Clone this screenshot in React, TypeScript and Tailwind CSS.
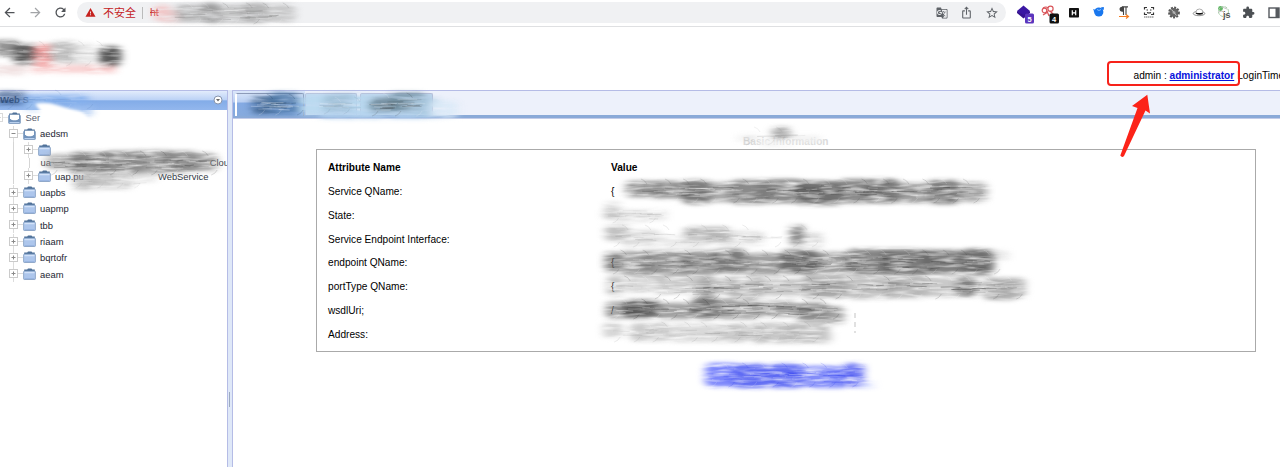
import React from "react";
import {
  MdArrowBack,
  MdArrowForward,
  MdRefresh,
  MdWarning,
  MdGTranslate,
  MdIosShare,
  MdStarBorder,
  MdExtension,
} from "react-icons/md";

type Blob = [x: number, y: number, rx: number, ry: number, color: string, opacity: number];
type Streaks = { x: number; y: number; w: number; h: number; color: string; opacity: number; count: number };

const random = (seed: number) => {
  const v = Math.sin(seed * 127.1 + 11.7) * 43758.5453;
  return v - Math.floor(v);
};

function StreakSet({ s }: { s: Streaks }) {
  return (
    <g>
      {Array.from({ length: s.count }, (_, i) => {
        const k = s.x * 3 + s.y + i * 7;
        const len = 6 + random(k) * 20;
        const px = s.x + random(k + 1) * Math.max(1, s.w - len);
        const off = (random(k + 2) + random(k + 3) - 1) * 0.32;
        const py = s.y + s.h / 2 + off * s.h;
        const white = random(k + 4) > 0.55;
        return (
          <path
            key={i}
            d={`M${px} ${py} q${len / 2} ${(random(k + 5) - 0.5) * 2} ${len} ${(random(k + 6) - 0.5) * 1.2}`}
            fill="none"
            stroke={white ? "#fff" : s.color}
            strokeWidth={0.4 + random(k + 8) * 0.5}
            opacity={s.opacity * (white ? 0.6 : 0.25 + random(k + 7) * 0.6)}
          />
        );
      })}
      {Array.from({ length: Math.floor(s.w / 10) }, (_, i) => {
        const k = s.x + s.y + i * 5;
        const bottom = i % 2 === 0;
        const px = s.x + 4 + i * 10 + random(k) * 5;
        const py = bottom ? s.y + s.h - 3 : s.y + 1;
        return (
          <path
            key={`e${i}`}
            d={bottom ? `M${px} ${py + 3} q4 -1 6 -5` : `M${px} ${py - 2} q4 1 6 5`}
            fill="none"
            stroke={random(k + 2) > 0.5 ? s.color : "#fff"}
            strokeWidth="0.9"
            opacity={s.opacity * 0.35}
          />
        );
      })}
    </g>
  );
}

const blobs: Blob[] = [
  // address bar
  [162, 13, 8, 8, "#f3b5b5", 0.7], [172, 16, 8, 7, "#e8c4c4", 0.7], [190, 13, 14, 9, "#9a9a9a", 0.6],
  [211, 13, 9, 10, "#777", 0.7], [232, 14, 13, 10, "#aaa", 0.6], [255, 13, 13, 10, "#909090", 0.6],
  [279, 13, 16, 9, "#b4b4b4", 0.65],
  // logo
  [6, 48, 13, 8, "#666", 0.7], [25, 54, 12, 10, "#4c4c4c", 0.9], [43, 55, 10, 11, "#ef8f8f", 0.85],
  [64, 52, 14, 11, "#b0b0b0", 0.8], [84, 54, 11, 11, "#ddd", 0.7], [110, 56, 11, 10, "#484848", 0.9],
  [60, 69, 30, 4, "#f5b5b5", 0.6], [102, 69, 14, 4, "#f5b0b0", 0.65], [10, 70, 16, 5, "#e8cfcf", 0.6],
  // panel title
  [10, 98, 15, 7, "#2e4d7c", 0.6], [55, 100, 33, 5, "#7faceb", 0.8], [33, 106, 8, 5, "#9fc2f0", 0.8],
  [80, 110, 12, 6, "#9dbff0", 0.8],
  // tree
  [65, 162, 19, 8, "#999", 0.7], [90, 163, 20, 11, "#707070", 0.8], [122, 163, 23, 12, "#777", 0.8],
  [153, 162, 20, 12, "#888", 0.75], [181, 162, 18, 11, "#777", 0.8], [206, 162, 11, 9, "#8d8d8d", 0.8],
  [85, 182, 12, 8, "#aaa", 0.65], [108, 180, 24, 9, "#bbb", 0.75], [140, 177, 17, 5, "#ddd", 0.7],
  // tabs
  [266, 105, 14, 9, "#31567f", 0.75], [284, 103, 16, 11, "#416f9f", 0.7], [315, 105, 17, 10, "#b9d9ef", 0.9],
  [342, 104, 18, 10, "#9cbdd3", 0.8], [365, 106, 15, 11, "#b8d8ef", 0.9], [386, 106, 16, 8, "#5d7888", 0.75],
  [407, 102, 18, 10, "#6a8798", 0.7], [380, 115, 60, 4, "#b5d3ef", 0.8], [427, 107, 15, 9, "#a9c8e0", 0.8], [444, 109, 14, 9, "#dbeaf7", 0.9],
  // heading
  [748, 138, 10, 4, "#ddd", 0.5], [781, 133, 9, 6, "#777", 0.6], [776, 143, 16, 4, "#f4f4f4", 0.9], [805, 139, 16, 4, "#f0f0f0", 0.8],
  // service name
  [644, 189, 18, 8, "#888", 0.9], [670, 191, 18, 10, "#858585", 0.9], [697, 192, 15, 12, "#666", 0.85],
  [722, 192, 13, 10, "#999", 0.8], [749, 192, 20, 12, "#777", 0.85], [782, 191, 23, 12, "#777", 0.85],
  [820, 193, 23, 12, "#606060", 0.9], [855, 191, 19, 12, "#777", 0.85], [883, 191, 17, 12, "#606060", 0.85],
  [914, 193, 17, 10, "#888", 0.8], [944, 192, 17, 12, "#666", 0.85], [974, 192, 13, 10, "#999", 0.8],
  [645, 202, 38, 4, "#fff", 0.95],
  // state
  [613, 206, 8, 4, "#ccc", 0.55], [611, 214, 7, 5, "#888", 0.5], [631, 216, 17, 6, "#ccc", 0.55], [655, 215, 12, 5, "#ddd", 0.7],
  // endpoint interface
  [617, 233, 12, 8, "#999", 0.6], [640, 238, 20, 8, "#ccc", 0.65], [707, 235, 23, 8, "#999", 0.7],
  [683, 242, 23, 6, "#ddd", 0.6], [744, 238, 20, 7, "#ccc", 0.6], [797, 235, 7, 10, "#666", 0.75], [813, 240, 10, 8, "#ccc", 0.6],
  // endpoint name
  [613, 262, 8, 10, "#666", 0.8], [635, 263, 17, 12, "#888", 0.75], [666, 263, 24, 12, "#777", 0.75],
  [698, 263, 18, 12, "#777", 0.75], [729, 261, 18, 12, "#656565", 0.85], [764, 264, 20, 11, "#888", 0.8],
  [800, 262, 20, 12, "#555", 0.85], [835, 263, 18, 11, "#888", 0.8], [869, 262, 23, 13, "#5c5c5c", 0.75],
  [908, 262, 25, 13, "#505050", 0.75], [943, 262, 20, 12, "#606060", 0.8], [977, 262, 17, 13, "#4c4c4c", 0.8],
  [1001, 255, 8, 5, "#ddd", 0.7],
  // port type name
  [615, 286, 8, 10, "#aaa", 0.7], [644, 284, 18, 9, "#ccc", 0.8], [677, 285, 22, 9, "#bbb", 0.8],
  [709, 286, 11, 10, "#888", 0.7], [744, 287, 22, 10, "#999", 0.7], [784, 287, 18, 9, "#bbb", 0.8],
  [825, 287, 23, 11, "#888", 0.75], [870, 288, 24, 11, "#aaa", 0.75], [908, 287, 21, 11, "#999", 0.7],
  [941, 287, 19, 10, "#bbb", 0.8], [967, 287, 10, 10, "#666", 0.75], [1000, 289, 17, 11, "#999", 0.8], [1018, 288, 7, 10, "#b0b0b0", 0.9],
  // wsdl
  [620, 310, 14, 8, "#777", 0.8], [642, 309, 18, 9, "#4a4a4a", 0.85], [675, 311, 20, 8, "#888", 0.8],
  [706, 308, 14, 11, "#555", 0.8], [738, 309, 22, 10, "#888", 0.8], [775, 309, 22, 8, "#888", 0.75],
  [812, 312, 16, 9, "#666", 0.75], [834, 315, 10, 9, "#888", 0.75],
  // address
  [613, 330, 10, 8, "#ccc", 0.8], [650, 332, 20, 9, "#bbb", 0.75], [695, 333, 25, 9, "#d0d0d0", 0.8],
  [732, 333, 16, 9, "#aaa", 0.7], [772, 333, 22, 10, "#b5b5b5", 0.8], [809, 333, 20, 10, "#aaa", 0.75], [825, 337, 7, 6, "#ccc", 0.6],
  // link
  [722, 375, 17, 12, "#7580fb", 0.95], [751, 376, 18, 12, "#5965f2", 0.95], [786, 376, 19, 12, "#5965f2", 0.95],
  [826, 377, 23, 11, "#7480f8", 0.9], [854, 375, 10, 12, "#606af3", 0.9], [867, 385, 7, 3, "#cdd5ff", 0.9],
];

const streaks: Streaks[] = [
  { x: 168, y: 4, w: 128, h: 20, color: "#555", opacity: 0.5, count: 28 },
  { x: 0, y: 42, w: 122, h: 24, color: "#777", opacity: 0.4, count: 28 },
  { x: 0, y: 91, w: 90, h: 18, color: "#335f9b", opacity: 0.35, count: 12 },
  { x: 44, y: 152, w: 174, h: 23, color: "#333", opacity: 0.55, count: 60 },
  { x: 70, y: 174, w: 85, h: 14, color: "#999", opacity: 0.4, count: 12 },
  { x: 250, y: 95, w: 50, h: 20, color: "#16324e", opacity: 0.6, count: 22 },
  { x: 318, y: 98, w: 45, h: 16, color: "#637f93", opacity: 0.45, count: 10 },
  { x: 368, y: 94, w: 58, h: 22, color: "#333", opacity: 0.55, count: 22 },
  { x: 740, y: 128, w: 66, h: 17, color: "#888", opacity: 0.4, count: 12 },
  { x: 626, y: 180, w: 360, h: 23, color: "#333", opacity: 0.5, count: 110 },
  { x: 604, y: 206, w: 62, h: 17, color: "#999", opacity: 0.5, count: 18 },
  { x: 606, y: 226, w: 214, h: 21, color: "#888", opacity: 0.5, count: 42 },
  { x: 606, y: 251, w: 395, h: 23, color: "#333", opacity: 0.5, count: 120 },
  { x: 608, y: 277, w: 414, h: 22, color: "#444", opacity: 0.6, count: 120 },
  { x: 606, y: 300, w: 238, h: 19, color: "#222", opacity: 0.55, count: 66 },
  { x: 606, y: 323, w: 224, h: 19, color: "#888", opacity: 0.5, count: 45 },
  { x: 704, y: 364, w: 162, h: 23, color: "#1b2cee", opacity: 0.5, count: 48 },
];

function Smears() {
  return (
    <svg className="pointer-events-none absolute inset-0" width="1280" height="467" viewBox="0 0 1280 467">
      <defs>
        <filter id="soft" x="0" y="0" width="1280" height="467" filterUnits="userSpaceOnUse" colorInterpolationFilters="sRGB">
          <feGaussianBlur stdDeviation="4 2.100" result="blur" />
          <feTurbulence type="fractalNoise" baseFrequency="0.045 0.28" numOctaves={2} seed={4} />
          <feColorMatrix values="0 0 0 0 0  0 0 0 0 0  0 0 0 0 0  1.6 0 0 0 0.08" result="grain" />
          <feComposite in="blur" in2="grain" operator="in" />
        </filter>
        <filter id="wipe" x="20" y="90" width="80" height="50" filterUnits="userSpaceOnUse">
          <feGaussianBlur stdDeviation="1.6" />
        </filter>
      </defs>
      <g filter="url(#soft)">
        {blobs.map(([x, y, rx, ry, color, o], i) => (
          <rect key={i} x={x - rx} y={y - ry} width={rx * 2} height={ry * 2} rx={Math.min(rx, ry) * 0.6} fill={color} opacity={o} />
        ))}
      </g>
      <path d="M35 104q10-3 22 1t22 6q8 3 10 10l-10 4H42q-2-8 0-12z" fill="#fff" filter="url(#wipe)" />
      {streaks.map((s, i) => (
        <StreakSet key={i} s={s} />
      ))}
      <path d="M855 313v20" stroke="#aaa" strokeWidth="0.7" strokeDasharray="5 4" />
    </svg>
  );
}

function ExtensionIcons() {
  const cell = "flex w-[25px] shrink-0 justify-center";
  const svg = { width: 20, height: 24, viewBox: "0 0 20 24", className: "overflow-visible" };
  return (
    <div className="flex h-[24px] items-center">
      <div className={cell}>
        <svg {...svg}>
          <path d="M9.500 5.500l6.500 5.500-6.500 5.500-6.500-5.500z" fill="#3a17a3" />
          <path d="M3 11l6.500 4 6.500-4v2L9.500 18.500l-6.500-5.500z" fill="#35128f" />
          <rect x="11" y="13.500" width="9" height="10" rx="1.500" fill="#5b35bd" />
          <text x="15.500" y="21.500" fontSize="7.500" fontWeight="bold" fill="#fff" textAnchor="middle">5</text>
        </svg>
      </div>
      <div className={cell}>
        <svg {...svg}>
          <g fill="none" stroke="#d9555a" strokeWidth="1.200">
            <circle cx="5.500" cy="10.500" r="2.300" />
            <circle cx="11.500" cy="8.800" r="2.600" />
            <path d="M8 11l2 5m1-5l4 4M4 15l5-3M4 8q3-2 5 0" />
          </g>
          <rect x="10.500" y="13.500" width="9.500" height="10" rx="1.500" fill="#111" />
          <text x="15.200" y="21.500" fontSize="7.500" fontWeight="bold" fill="#fff" textAnchor="middle">4</text>
        </svg>
      </div>
      <div className={cell}>
        <svg {...svg}>
          <rect x="5" y="8" width="10" height="9.500" rx="0.800" fill="#111" />
          <path d="M8.300 10.300v5m3.400-5v5m-3.400-2.500h3.400" stroke="#fff" strokeWidth="1.200" />
        </svg>
      </div>
      <div className={cell}>
        <svg {...svg}>
          <circle cx="9.800" cy="12" r="4.600" fill="#1977ee" />
          <path d="M4.500 9.500l3 1.500-2.500 1m7-4l2.500-.5-.5 2.500" fill="#1977ee" stroke="#1977ee" />
          <path d="M8 9.500q2 2 4 0" stroke="#8cc4ff" fill="none" strokeWidth="0.900" />
        </svg>
      </div>
      <div className={cell}>
        <svg {...svg}>
          <path d="M9.500 6.700H8a2.500 2.500 0 000 5h1.500z" fill="#444" />
          <path d="M8 6.900h6M9.500 7v8M12 7v8" fill="none" stroke="#444" strokeWidth="1.100" />
          <path d="M5 16.500h9m-2-2l2.500 2-2.500 2" fill="none" stroke="#f47c20" strokeWidth="1.200" />
        </svg>
      </div>
      <div className={cell}>
        <svg {...svg}>
          <path d="M5.500 9.500v-2h2.500m4 0h2.500v2m0 3v2h-2.500m-4 0H5.500v-2" fill="none" stroke="#333" strokeWidth="1.200" />
          <path d="M7.500 10h1.500m2 0h1.500M8 12.500q2 1 4 0" stroke="#333" fill="none" strokeWidth="1.200" />
          <path d="M5 17h10" stroke="#999" strokeWidth="1.500" strokeDasharray="1.500 .5" />
        </svg>
      </div>
      <div className={cell}>
        <svg {...svg}>
          <circle cx="10" cy="12.500" r="4.500" fill="#666" />
          <circle cx="10" cy="12.500" r="5" fill="none" stroke="#555" strokeWidth="1.800" strokeDasharray="2 1.300" />
          <circle cx="10" cy="12.500" r="1.600" fill="#999" />
          <path d="M7.500 9.500l5 6" stroke="#ccc" strokeWidth="0.900" />
        </svg>
      </div>
      <div className={cell}>
        <svg {...svg}>
          <ellipse cx="10" cy="13.500" rx="5.800" ry="2.200" fill="#fff" stroke="#777" strokeWidth="0.800" />
          <path d="M7 12q0-3 3.500-3t3.500 3.500" fill="#fff" stroke="#999" strokeWidth="0.800" />
          <path d="M6.800 12.500q3.500 1 7 0v1.800q-4 1-7-.5z" fill="#111" />
        </svg>
      </div>
      <div className={cell}>
        <svg {...svg}>
          <circle cx="6.500" cy="8.500" r="2.400" fill="#62b765" />
          <circle cx="9.500" cy="11.500" r="5" fill="none" stroke="#a8cfa9" strokeWidth="1" strokeDasharray="3 1" />
          <path d="M4 12l4-1 4 4M8 7l5 2" stroke="#aaa" strokeWidth="0.700" fill="none" />
          <text x="9" y="17.500" fontSize="9" fontWeight="bold" fill="#555">js</text>
        </svg>
      </div>
      <div className={cell}>
        <MdExtension size={13} color="#4c5054" />
      </div>
      <div className={cell}>
        <svg {...svg}>
          <rect x="5" y="8" width="10" height="9.500" fill="#fff" stroke="#55595e" strokeWidth="1.400" />
          <path d="M11.500 8h3.500v9.500h-3.500z" fill="#55595e" />
        </svg>
      </div>
    </div>
  );
}

function BrowserBar() {
  return (
    <div className="flex h-[27px] w-[1300px] shrink-0 items-start border-b border-[#dfe0e2] bg-white">
      <div className="flex h-[25px] w-[77px] shrink-0 items-center gap-[10.500px] pl-[2px] text-[#505357]">
        <MdArrowBack size={15} className="shrink-0" />
        <MdArrowForward size={15} className="shrink-0 text-[#a2a4a7]" />
        <MdRefresh size={15} className="shrink-0" />
      </div>
      <div className="mt-[2px] flex h-[21px] w-[929px] shrink-0 items-center rounded-full bg-[#f0f1f3] pl-[8px] pr-[7px] text-[11px] text-[#c5221f]">
        <MdWarning size={11} className="shrink-0" />
        <span className="ml-[7px] whitespace-nowrap font-['Noto_Sans_CJK_SC',sans-serif] leading-none">不安全</span>
        <span className="ml-[6px] h-[12px] w-px bg-[#bbb]" />
        <span className="ml-[7px] text-[10.500px] line-through">ht</span>
        <div className="ml-auto flex items-center gap-[12px] text-[#5f6368]">
          <MdGTranslate size={12} />
          <MdIosShare size={13} />
          <MdStarBorder size={14} />
        </div>
      </div>
      <div className="ml-[5px]">
        <ExtensionIcons />
      </div>
    </div>
  );
}

function Toggle({ open = false, faded = false }: { open?: boolean; faded?: boolean }) {
  return (
    <svg width="15" height="16" viewBox="0 0 15 16" className={faded ? "shrink-0 opacity-70" : "shrink-0"}>
      <path d="M4.500 0v3.500M4.500 12v4M9 7.500h5" stroke="#dcdcdc" />
      <rect x="0.500" y="3.500" width="8" height="8" fill="#fff" stroke="#cbcbcb" />
      <path d={open ? "M2.500 7.500h4" : "M2.500 7.500h4M4.500 5.500v4"} stroke="#8a8a8a" />
    </svg>
  );
}

function Folder({ open = false }: { open?: boolean }) {
  return (
    <svg width="13" height="13" viewBox="0 0 13 13" className="shrink-0">
      <path d="M1.200 1.500h3l.8-1h3.500l.8 1h2.500v3H1.200z" fill="#4f7199" />
      <rect x="0.600" y="3.200" width="11.800" height="8.300" rx="0.700" fill={open ? "#7293bc" : "#adc6ec"} stroke="#7f9abf" strokeWidth="0.800" />
      {open ? (
        <path d="M2 2.800h9v3.500q-1 2-3 2H5q-2 0-3-2z" fill="#fff" />
      ) : (
        <path d="M1.500 4.500h10" stroke="#d3e2f9" strokeWidth="1.500" />
      )}
      <path d="M1.500 10.500h10" stroke={open ? "#b9d0ee" : "#9ab6e2"} />
    </svg>
  );
}

function TreeNode({ label, open }: { label: string; open?: boolean }) {
  return (
    <div className="flex h-[16.350px] items-center pl-[9px]">
      <Toggle open={open} />
      <span className="-ml-[1.500px] flex"><Folder open={open} /></span>
      <span className="ml-[4.500px] leading-none">{label}</span>
    </div>
  );
}

function Sidebar() {
  return (
    <aside className="flex w-[228px] shrink-0 flex-col overflow-hidden border-r border-t border-[#b5bce6] bg-white">
      <div className="flex h-[19px] shrink-0 items-center justify-between bg-[linear-gradient(#e2ecfc_0%,#bdd3f6_45%,#83ace8_52%,#93b7ed_100%)] pb-[1px] pr-[4px] text-[9.500px] font-bold text-[#3a5a86]">
        <span>Web S</span>
        <svg width="10" height="10" viewBox="0 0 10 10">
          <circle cx="5" cy="5" r="4" fill="#fff" stroke="#8795ad" />
          <path d="M3 4h4L5 6.500z" fill="#666" />
        </svg>
      </div>
      <div className="text-[9.400px] text-[#1d2633]">
        <div className="flex h-[16px] items-center overflow-hidden">
          <span className="-ml-[6px] flex"><Toggle open faded /></span>
          <span className="-ml-[1px] flex"><Folder open /></span>
          <span className="ml-[4.500px] leading-none text-[#5a6270]">Ser</span>
        </div>
        <TreeNode label="aedsm" open />
        <div className="ml-[13px] border-l border-[#d5d5d5]">
          <div className="flex h-[16px] items-center pl-[10px]">
            <Toggle />
            <span className="-ml-[1px] flex"><Folder /></span>
          </div>
          <div className="ml-[14.500px] flex h-[10px] items-center justify-between whitespace-nowrap border-l border-[#d5d5d5] pl-[11px] text-[#3c4148]">
            <span>ua</span>
            <span className="-mr-[2px]">Clou</span>
          </div>
          <div className="flex h-[16px] items-center pl-[10px]">
            <Toggle />
            <span className="-ml-[1px] flex"><Folder /></span>
            <span className="ml-[4px] w-[103px] leading-none">uap.pu</span>
            <span className="leading-none text-[#30363f]">WebService</span>
          </div>
        </div>
        {["uapbs", "uapmp", "tbb", "riaam", "bqrtofr", "aeam"].map((name) => (
          <TreeNode key={name} label={name} />
        ))}
      </div>
    </aside>
  );
}

const attributes = [
  ["Service QName:", "{"],
  ["State:", ""],
  ["Service Endpoint Interface:", ""],
  ["endpoint QName:", "{"],
  ["portType QName:", "{"],
  ["wsdlUri;", "/"],
  ["Address:", ""],
];

function Content() {
  return (
    <main className="flex min-w-0 flex-1 flex-col border-l border-t border-[#b5bce6] bg-white">
      <div className="flex h-[27px] shrink-0 items-start border-b-[3px] border-[#8aaad8] bg-[#edf1fb] shadow-[0_1px_0_#c3cce8]">
        <div className="flex h-[25px] w-[72px] items-end bg-[linear-gradient(#dbe7fa_0%,#bcd1f3_42%,#84aae3_50%,#86aadd_100%)] pl-[2px]">
          <div className="h-[23px] w-[69px] rounded-t-[2px] border-l-2 border-r border-t border-[#8d9bb9] border-l-white" />
        </div>
        <div className="mt-[2px] h-[22px] w-[52px] rounded-t-[2px] border border-b-0 border-[#b7c0db] bg-[#c7dcf3]" />
        <div className="ml-[3px] mt-[2px] h-[22px] w-[73px] rounded-t-[2px] border border-b-0 border-[#b7c0db] bg-[#c0d8ef]" />
      </div>
      <div className="mt-[17px] h-[14px] pl-[510px] text-[10.150px] font-bold leading-[13px] text-[#dadada]">Basic Information</div>
      <section className="ml-[83px] flex h-[203px] w-[940px] shrink-0 flex-col border border-[#aaa] pl-[11px] pt-[6px] text-[10.150px] text-black">
        <div className="flex h-[23.750px] items-center font-bold">
          <span className="w-[283px]">Attribute Name</span>
          <span>Value</span>
        </div>
        {attributes.map(([name, value]) => (
          <div key={name} className="flex h-[23.750px] items-center">
            <span className="w-[283px]">{name}</span>
            <span>{value}</span>
          </div>
        ))}
      </section>
    </main>
  );
}

export default function App() {
  return (
    <div className="relative flex h-[467px] w-[1280px] flex-col overflow-hidden bg-white font-['Liberation_Sans',Arial,sans-serif]">
      <BrowserBar />
      <header className="flex h-[63px] shrink-0 items-end pb-[8px] pl-[1133.500px] text-[10.150px] leading-[12px]">
        <span className="whitespace-pre">admin : </span>
        <a className="font-bold text-[#0712dd] underline">administrator</a>
        <span className="ml-[3px] whitespace-nowrap">LoginTime</span>
      </header>
      <div className="flex min-h-0 flex-1">
        <Sidebar />
        <div className="flex w-[4px] shrink-0 items-center bg-[#dfe8f8] pt-[242px]">
          <span className="ml-[1px] h-[15px] w-px bg-[#9caac0]" />
        </div>
        <Content />
      </div>
      <Smears />
      <div className="absolute left-[1107px] top-[60.500px] h-[25.500px] w-[133px] rounded-[4px] border-2 border-[#f7221a]" />
      <svg className="absolute left-[1115px] top-[90px]" width="40" height="72" viewBox="0 0 40 72">
        <path d="M32.300 4.800L35 23.500L30.500 20.500L9 66Q7 68 5.300 65.500L22.500 18L17 16Z" fill="#fc2318" />
      </svg>
    </div>
  );
}
